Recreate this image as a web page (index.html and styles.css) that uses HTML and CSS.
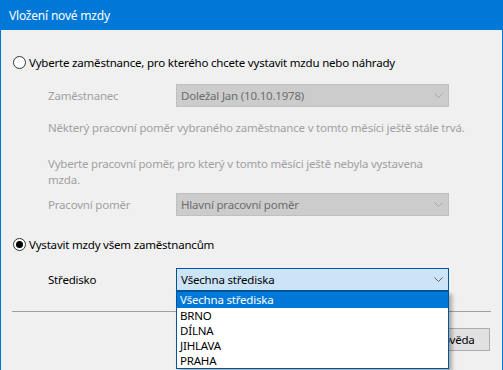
FILE: index.html
```html
<!DOCTYPE html>
<html>
<head>
	<meta charset="UTF-8">
	<title>Vložení nové mzdy</title>
	<link rel="stylesheet" href="styles.css">
</head>
<body>

<div class="dialog">
	<div class="titlebar">Vložení nové mzdy</div>

	<div class="dialog-body">

		<!-- volba 1 -->
		<label class="radio-row">
			<span class="radio"></span>
			<span>Vyberte zaměstnance, pro kterého chcete vystavit mzdu nebo náhrady</span>
		</label>

		<div class="field-row row-employee disabled">
			<span class="field-label">Zaměstnanec</span>
			<div class="combo">
				<span class="combo-text">Doležal Jan (10.10.1978)</span>
				<svg class="chevron" width="9" height="5" viewBox="0 0 9 5"><polyline points="0.5,0.5 4.5,4.5 8.5,0.5" fill="none" stroke="currentColor" stroke-width="1"/></svg>
			</div>
		</div>

		<p class="note note-first">Některý pracovní poměr vybraného zaměstnance v tomto měsíci ještě stále trvá.</p>
		<p class="note note-second">Vyberte pracovní poměr, pro který v tomto měsíci ještě nebyla vystavena<br>mzda.</p>

		<div class="field-row row-contract disabled">
			<span class="field-label">Pracovní poměr</span>
			<div class="combo">
				<span class="combo-text">Hlavní pracovní poměr</span>
				<svg class="chevron" width="9" height="5" viewBox="0 0 9 5"><polyline points="0.5,0.5 4.5,4.5 8.5,0.5" fill="none" stroke="currentColor" stroke-width="1"/></svg>
			</div>
		</div>

		<!-- volba 2 -->
		<label class="radio-row radio-all">
			<span class="radio checked"></span>
			<span>Vystavit mzdy všem zaměstnancům</span>
		</label>

		<div class="field-row row-center">
			<span class="field-label">Středisko</span>
			<div class="combo active">
				<span class="combo-text">Všechna střediska</span>
				<svg class="chevron" width="9" height="5" viewBox="0 0 9 5"><polyline points="0.5,0.5 4.5,4.5 8.5,0.5" fill="none" stroke="currentColor" stroke-width="1"/></svg>
			</div>
		</div>

		<div class="separator"></div>

		<div class="buttons">
			<button class="btn">Nápověda</button>
		</div>
	</div>

	<!-- rozbalený seznam stredisek -->
	<ul class="dropdown-list">
		<li class="selected">Všechna střediska</li>
		<li>BRNO</li>
		<li>DÍLNA</li>
		<li>JIHLAVA</li>
		<li>PRAHA</li>
	</ul>
</div>

</body>
</html>
```

FILE: styles.css
```css
html, body {
	margin: 0;
	padding: 0;
	overflow: hidden;
}

body {
	font-family: "Noto Sans", "Open Sans", sans-serif;
	font-size: 11.5px;
	letter-spacing: -0.2px;
	color: #000000;
	background-color: #f0f0f0;
}

/* okno dialogu */
.dialog {
	position: relative;
	width: 503px;
	height: 370px;
	box-sizing: border-box;
	border-left: 1px solid #0078d7;
	border-right: 1px solid #0078d7;
	background-color: #f0f0f0;
	overflow: hidden;
}

.titlebar {
	height: 30px;
	background-color: #0078d7;
	color: #ffffff;
	display: flex;
	align-items: center;
	padding-left: 8px;
	font-size: 12px;
}

.dialog-body {
	padding: 24px 12px 0 12px;
}

/* prepinace */
.radio-row {
	display: flex;
	align-items: center;
	gap: 3px;
	height: 16px;
}

.radio {
	width: 11px;
	height: 11px;
	border: 1px solid #333333;
	border-radius: 50%;
	background-color: #ffffff;
	position: relative;
	flex: none;
}

.radio.checked::after {
	content: "";
	position: absolute;
	left: 2px;
	top: 2px;
	width: 7px;
	height: 7px;
	border-radius: 50%;
	background-color: #000000;
}

.radio-all {
	margin-top: 20px;
}

/* radky s comboboxem */
.field-row {
	display: flex;
	align-items: center;
	margin-left: 35px;
	height: 23px;
}

.field-label {
	width: 128px;
	flex: none;
}

.row-employee {
	margin-top: 14px;
}

.row-contract {
	margin-top: 5px;
}

.row-center {
	margin-top: 16px;
}

.disabled .field-label {
	color: #a0a0a0;
}

.combo {
	width: 273px;
	height: 23px;
	box-sizing: border-box;
	display: flex;
	align-items: center;
	justify-content: space-between;
	padding: 0 5px 0 4px;
	border: 1px solid #bfbfbf;
	background-color: #cccccc;
	color: #6d6d6d;
}

.disabled .chevron {
	color: #a8a8a8;
}

.combo.active {
	background-color: #cce4f7;
	border-color: #005499;
	color: #000000;
}

.combo.active .chevron {
	color: #606060;
}

/* poznamky */
.note {
	margin: 0 0 0 35px;
	color: #a0a0a0;
	line-height: 16px;
	white-space: nowrap;
}

.note-first {
	margin-top: 13px;
}

.note-second {
	margin-top: 20px;
}

.separator {
	margin: 20px 0 0 -1px;
	height: 1px;
	background-color: #a0a0a0;
	width: 479px;
}

.buttons {
	display: flex;
	justify-content: flex-end;
	margin-top: 16px;
}

.btn {
	width: 84px;
	height: 23px;
	font-family: inherit;
	font-size: 11.5px;
	letter-spacing: -0.2px;
	color: #000000;
	background-color: #e1e1e1;
	border: 1px solid #adadad;
	padding: 0;
}

/* rozbaleny seznam */
.dropdown-list {
	position: absolute;
	left: 175px;
	top: 291px;
	width: 273px;
	box-sizing: border-box;
	margin: 0;
	padding: 0;
	list-style-type: none;
	background-color: #ffffff;
	border: 1px solid #005499;
	box-shadow: 3px 3px 4px rgba(0, 0, 0, 0.3);
}

.dropdown-list li {
	height: 15px;
	line-height: 15px;
	padding-left: 3px;
}

.dropdown-list li.selected {
	height: 16px;
	line-height: 16px;
	background-color: #0078d7;
	color: #ffffff;
}
```
